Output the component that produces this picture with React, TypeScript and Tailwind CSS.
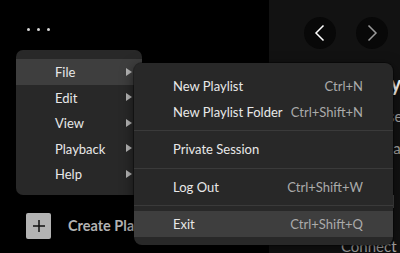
import React from "react";

const menuFont = { fontFamily: 'Lato, "Noto Sans", sans-serif' };

function Tri() {
  return (
    <svg width="6" height="8" viewBox="0 0 6 8" className="shrink-0">
      <polygon points="0,0 6,4 0,8" fill="#b5b5b5" />
    </svg>
  );
}

function MainItem({ label, active }: { label: string; active?: boolean }) {
  return (
    <div
      className={`h-[25.5px] flex items-center pl-[39px] pr-[10px] justify-between ${
        active ? "bg-[#3e3e3e]" : ""
      }`}
    >
      <span className="text-[13px] text-[#e8e8e8] leading-none mt-[2px]">{label}</span>
      <Tri />
    </div>
  );
}

function SubItem({
  label,
  shortcut,
  active,
}: {
  label: string;
  shortcut?: string;
  active?: boolean;
}) {
  return (
    <div
      className={`h-[25.5px] flex items-center justify-between pl-[39px] pr-[30px] ${
        active ? "bg-[#3e3e3e]" : ""
      }`}
    >
      <span className="text-[13px] text-[#e8e8e8] leading-none whitespace-nowrap mt-[2px]">{label}</span>
      {shortcut ? (
        <span className="text-[13px] text-[#ababab] leading-none whitespace-nowrap mt-[2px]">{shortcut}</span>
      ) : null}
    </div>
  );
}

function Sep() {
  return <div className="mt-[6px] mb-[5px] h-px bg-[#3a3a3a]" />;
}

export default function App() {
  return (
    <div className="relative w-[400px] h-[253px] overflow-hidden bg-black flex">
      {/* Left sidebar */}
      <div className="w-[269px] shrink-0 flex flex-col bg-black">
        <div className="flex gap-[7px] pl-[26.5px] pt-[27.5px]">
          <div className="w-[3px] h-[3px] rounded-full bg-[#d4d4d4]" />
          <div className="w-[3px] h-[3px] rounded-full bg-[#d4d4d4]" />
          <div className="w-[3px] h-[3px] rounded-full bg-[#d4d4d4]" />
        </div>
        <div className="flex-1" />
        <div className="flex items-center pl-[26px] pb-[14px] gap-[17px]">
          <div className="w-[25px] h-[26px] rounded-[2px] bg-[#b3b3b3] flex items-center justify-center">
            <svg width="14" height="14" viewBox="0 0 14 14">
              <path d="M7 1 V13 M1 7 H13" stroke="#111" strokeWidth="1.5" />
            </svg>
          </div>
          <span
            className="text-[14.5px] font-bold text-[#b3b3b3] whitespace-nowrap"
            style={{ fontFamily: 'Lato, "Noto Sans", sans-serif' }}
          >
            Create Playlist
          </span>
        </div>
      </div>

      {/* Right panel */}
      <div className="flex-1 bg-[#121212] flex flex-col overflow-hidden">
        <div className="flex gap-[20px] pl-[35px] pt-[17px]">
          <div className="w-[32px] h-[32px] rounded-full bg-[#080808] flex items-center justify-center">
            <svg width="16" height="16" viewBox="0 0 16 16" fill="none">
              <path d="M11.5 0.5 L4 8 L11.5 15.5" stroke="#ffffff" strokeWidth="1.5" />
            </svg>
          </div>
          <div className="w-[32px] h-[32px] rounded-full bg-[#080808] flex items-center justify-center">
            <svg width="16" height="16" viewBox="0 0 16 16" fill="none">
              <path d="M4.5 0.5 L12 8 L4.5 15.5" stroke="#9a9a9a" strokeWidth="1.5" />
            </svg>
          </div>
        </div>
        <div
          className="flex flex-col items-end mt-[20px]"
          style={{ fontFamily: 'Lato, "Noto Sans", sans-serif' }}
        >
          <span className="text-[20px] font-bold text-white whitespace-nowrap -mr-[1px] leading-[28px]">
            Library
          </span>
          <span className="text-[15px] text-[#a7a7a7] whitespace-nowrap -mr-[9px] mt-[8px]">
            Releases
          </span>
          <span className="text-[15px] text-[#a7a7a7] whitespace-nowrap -mr-[6px] mt-[9px]">
            Chat
          </span>
          <div className="w-[2px] h-[13px] bg-[#6a6a6a] mr-[6px] mt-[36px]" />
        </div>
        <div className="flex-1" />
        <div className="pl-[72px] -mb-[5px]">
          <span
            className="text-[15px] text-[#b3b3b3] whitespace-nowrap"
            style={{ fontFamily: 'Lato, "Noto Sans", sans-serif' }}
          >
            Connect
          </span>
        </div>
      </div>

      {/* Main menu */}
      <div
        className="absolute left-[16px] top-[50px] w-[126px] rounded-[7px] bg-[#282828] pt-[9px] pb-[8px]"
        style={menuFont}
      >
        <MainItem label="File" active />
        <MainItem label="Edit" />
        <MainItem label="View" />
        <MainItem label="Playback" />
        <MainItem label="Help" />
      </div>

      {/* Submenu */}
      <div
        className="absolute left-[134px] top-[63px] w-[259px] rounded-[8px] bg-[#282828] pt-[10px] pb-[8px] shadow-[0_0_0_1px_rgba(0,0,0,0.35),0_4px_14px_rgba(0,0,0,0.55)]"
        style={menuFont}
      >
        <SubItem label="New Playlist" shortcut="Ctrl+N" />
        <SubItem label="New Playlist Folder" shortcut="Ctrl+Shift+N" />
        <Sep />
        <SubItem label="Private Session" />
        <Sep />
        <SubItem label="Log Out" shortcut="Ctrl+Shift+W" />
        <Sep />
        <SubItem label="Exit" shortcut="Ctrl+Shift+Q" active />
      </div>
    </div>
  );
}
